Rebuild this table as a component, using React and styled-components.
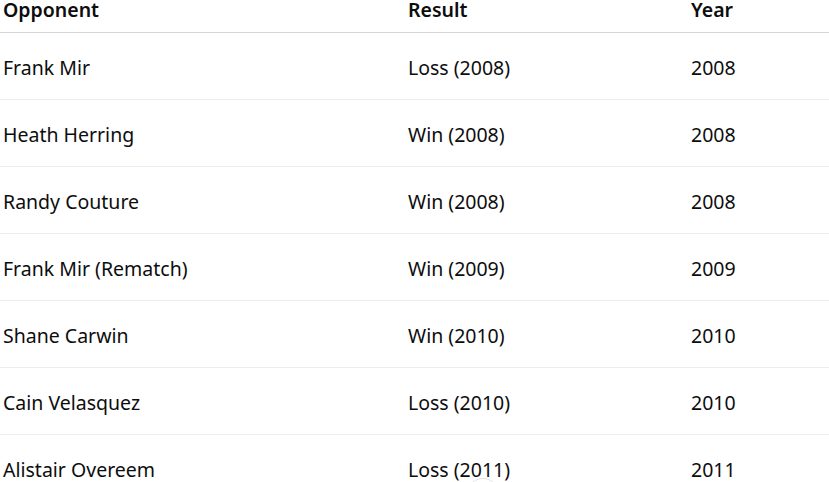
import React from "react";
import styled, { createGlobalStyle } from "styled-components";

const fights = [
  { opponent: "Frank Mir", result: "Loss (2008)", year: 2008 },
  { opponent: "Heath Herring", result: "Win (2008)", year: 2008 },
  { opponent: "Randy Couture", result: "Win (2008)", year: 2008 },
  { opponent: "Frank Mir (Rematch)", result: "Win (2009)", year: 2009 },
  { opponent: "Shane Carwin", result: "Win (2010)", year: 2010 },
  { opponent: "Cain Velasquez", result: "Loss (2010)", year: 2010 },
  { opponent: "Alistair Overeem", result: "Loss (2011)", year: 2011 },
];

export default function App() {
  return (
    <>
      <GlobalStyle />
      <Page>
        <Table>
          <HeadRow>
            <HeadCell>Opponent</HeadCell>
            <HeadCell>Result</HeadCell>
            <HeadCell>Year</HeadCell>
          </HeadRow>
          {fights.map((f) => (
            <Row key={f.opponent}>
              <Cell>{f.opponent}</Cell>
              <Cell>{f.result}</Cell>
              <Cell>{f.year}</Cell>
            </Row>
          ))}
        </Table>
        <ScrollButton />
      </Page>
    </>
  );
}

const GlobalStyle = createGlobalStyle`
  html, body {
    margin: 0;
    background: #ffffff;
    overflow: hidden;
  }
`;

const Page = styled.div`
  position: relative;
  width: 829px;
  height: 482px;
  overflow: hidden;
  font-family: "Noto Sans", "Open Sans", sans-serif;
  color: #0d0d0d;
`;

const Table = styled.div`
  display: flex;
  flex-direction: column;
  margin-top: -4px;
`;

const HeadRow = styled.div`
  display: grid;
  grid-template-columns: 405px 283px 1fr;
  padding: 0 0 8px 3px;
  border-bottom: 1px solid #d6d6d6;
`;

const Row = styled.div`
  display: grid;
  grid-template-columns: 405px 283px 1fr;
  padding: 21px 0 17px 3px;
  border-bottom: 1px solid #ededed;
`;

const HeadCell = styled.div`
  font-size: 19.5px;
  line-height: 28px;
  font-weight: 600;
`;

const Cell = styled.div`
  font-size: 19.5px;
  line-height: 28px;
`;

const ScrollButton = styled.div`
  position: absolute;
  left: 466px;
  top: 478px;
  width: 32px;
  height: 32px;
  border-radius: 50%;
  border: 1px solid #e3e3e3;
  background: #ffffff;
`;
